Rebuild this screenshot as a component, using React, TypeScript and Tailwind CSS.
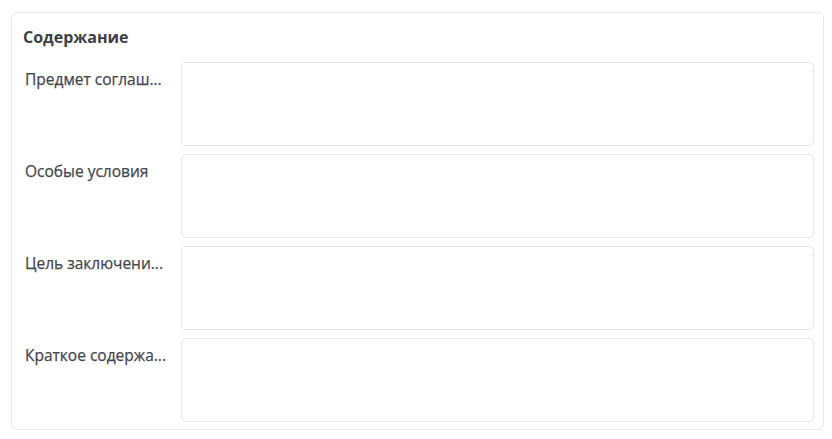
import React from "react";

const rows = [
  "Предмет соглаш...",
  "Особые условия",
  "Цель заключени...",
  "Краткое содержа...",
];

export default function App() {
  return (
    <div className="w-[832px] h-[439px] bg-white pt-[12px] pl-[11px] pr-[8px] pb-[9px]" style={{ fontFamily: '"Open Sans", "Noto Sans", sans-serif' }}>
      <div className="h-full border border-[#e6e6ea] rounded-[6px] pl-[11px] pr-[9px] pt-[12px]">
        <div className="text-[16px] leading-[24px] font-bold text-[#3e3e45] pb-[13px]">Содержание</div>
        <div className="flex flex-col gap-[8px]">
          {rows.map((r) => (
            <div key={r} className="flex">
              <div className="w-[158px] shrink-0 pl-[2px] pr-[4px] pt-[6px] text-[15.5px] leading-[22px] text-[#46464d] whitespace-nowrap [-webkit-text-stroke:0.25px_#46464d]">
                {r}
              </div>
              <textarea className="flex-1 h-[84px] border border-[#e4e4ea] rounded-[5px] resize-none bg-white outline-none" />
            </div>
          ))}
        </div>
      </div>
    </div>
  );
}
